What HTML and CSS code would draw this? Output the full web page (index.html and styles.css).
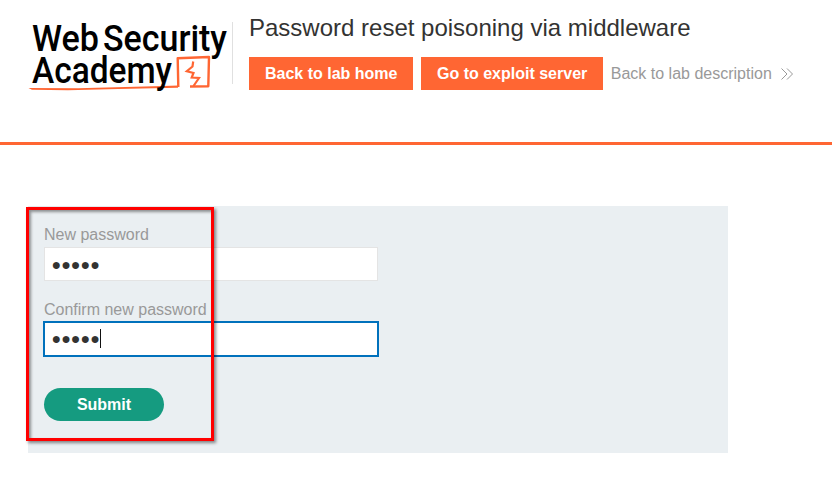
FILE: index.html
```html
<!DOCTYPE html>
<html lang="en">
<head>
<meta charset="utf-8">
<title>Password reset poisoning via middleware</title>
<link rel="stylesheet" href="styles.css">
</head>
<body>
<header class="lab-header">
  <svg class="logo" viewBox="0 0 204 80" role="img" aria-label="Web Security Academy">
    <path class="logo-line" d="M150.300 72 149.700 43.200 181 42 180.300 71.200 162 71.500"/>
    <path class="logo-swash" d="M0.500 73 50 73.200 135 71 150 70.500 150 72.700 90 74 40 75.300 4 74.700Z"/>
    <path class="logo-bolt" d="M165.200 46.500 164.500 51.500 158.800 56.200 165.500 58 163.700 62.500 171 63 165.500 71"/>
    <g class="logo-text">
      <text x="4" y="36" textLength="67" lengthAdjust="spacingAndGlyphs">Web</text>
      <text x="75" y="36" textLength="124" lengthAdjust="spacingAndGlyphs">Security</text>
      <text x="4" y="68" textLength="140" lengthAdjust="spacingAndGlyphs">Academy</text>
    </g>
  </svg>
  <div class="title-area">
    <h2>Password reset poisoning via middleware</h2>
    <nav class="links">
      <a class="button">Back to lab home</a>
      <a class="button server">Go to exploit server</a>
      <a class="back">Back to lab description
        <svg class="chevrons" viewBox="0 0 12 12"><path d="M.5.5 6 6 .5 11.500M6 .5 11.500 6 6 11.500"/></svg>
      </a>
    </nav>
  </div>
</header>
<main>
  <form class="panel">
    <label>New password</label>
    <div class="field">●●●●●</div>
    <label>Confirm new password</label>
    <div class="field focused">●●●●●<span class="caret"></span></div>
    <button type="button">Submit</button>
    <div class="highlight"></div>
  </form>
</main>
</body>
</html>
```
FILE: styles.css
```css
* { box-sizing: border-box; }
body {
  margin: 0;
  background: #fff;
  color: #333332;
  font: 16px/18px "Liberation Sans", Arial, sans-serif;
}
.lab-header {
  display: flex;
  align-items: flex-start;
  height: 145px;
  padding: 15px 0 0 28px;
  border-bottom: 3px solid #ff6633;
}
.logo { flex: none; width: 204px; height: 80px; overflow: visible; }
.logo-text { font: 500 37.500px Roboto, sans-serif; fill: #000; }
.logo-line { fill: none; stroke: #ff6633; stroke-width: 2.4; stroke-linejoin: round; }
.logo-swash { fill: #ff6633; }
.logo-bolt { fill: none; stroke: #ff6633; stroke-width: 2.2; }
.title-area {
  position: relative;
  padding-left: 17px;
}
.title-area::before {
  content: "";
  position: absolute;
  left: 0;
  top: 7px;
  width: 1px;
  height: 62px;
  background: #e0e0e0;
}
h2 { margin: -1px 0 15px; font-size: 24px; line-height: 28px; font-weight: 400; white-space: nowrap; }
.links { display: flex; gap: 8px; white-space: nowrap; }
.button {
  height: 33px;
  padding: 0 16px;
  background: #ff6633;
  color: #fff;
  font-weight: 700;
  line-height: 33px;
}
.server { width: 182px; padding: 0 0 0 15.500px; }
.back { display: flex; align-items: center; gap: 9px; height: 33px; margin-left: -.7px; color: #999; }
.chevrons { width: 12px; height: 12px; fill: none; stroke: #999; stroke-width: 1; }
main { padding: 61px 28px 0; }
.panel {
  position: relative;
  display: flex;
  flex-direction: column;
  align-items: flex-start;
  width: 700px;
  height: 247px;
  padding: 20px 16px 0;
  background: #eaeff2;
}
label { color: #999; height: 21px; }
.field {
  display: flex;
  align-items: center;
  width: 334px;
  height: 34px;
  margin-bottom: 20px;
  padding: 1px 6.500px 0;
  border: 1px solid #e4e4e4;
  background: #fff;
}
.focused {
  width: 336px;
  height: 36px;
  margin: -1px 0 31px -1px;
  padding-top: 0;
  padding-bottom: 1px;
  border: 2px solid #0071bc;
}
.caret { width: 1px; height: 19px; background: #111; }
button {
  width: 120px;
  height: 33px;
  padding: 0;
  border: 0;
  border-radius: 17px;
  background: #159b80;
  color: #fff;
  font: 700 16px/33px "Liberation Sans", Arial, sans-serif;
}
.highlight {
  position: absolute;
  left: -2px;
  top: 1px;
  width: 188px;
  height: 234px;
  border: 3px solid #f00;
  box-shadow: 2px 2px 3px rgba(0,0,0,.45), inset 2px 2px 3px rgba(0,0,0,.4);
}
```
